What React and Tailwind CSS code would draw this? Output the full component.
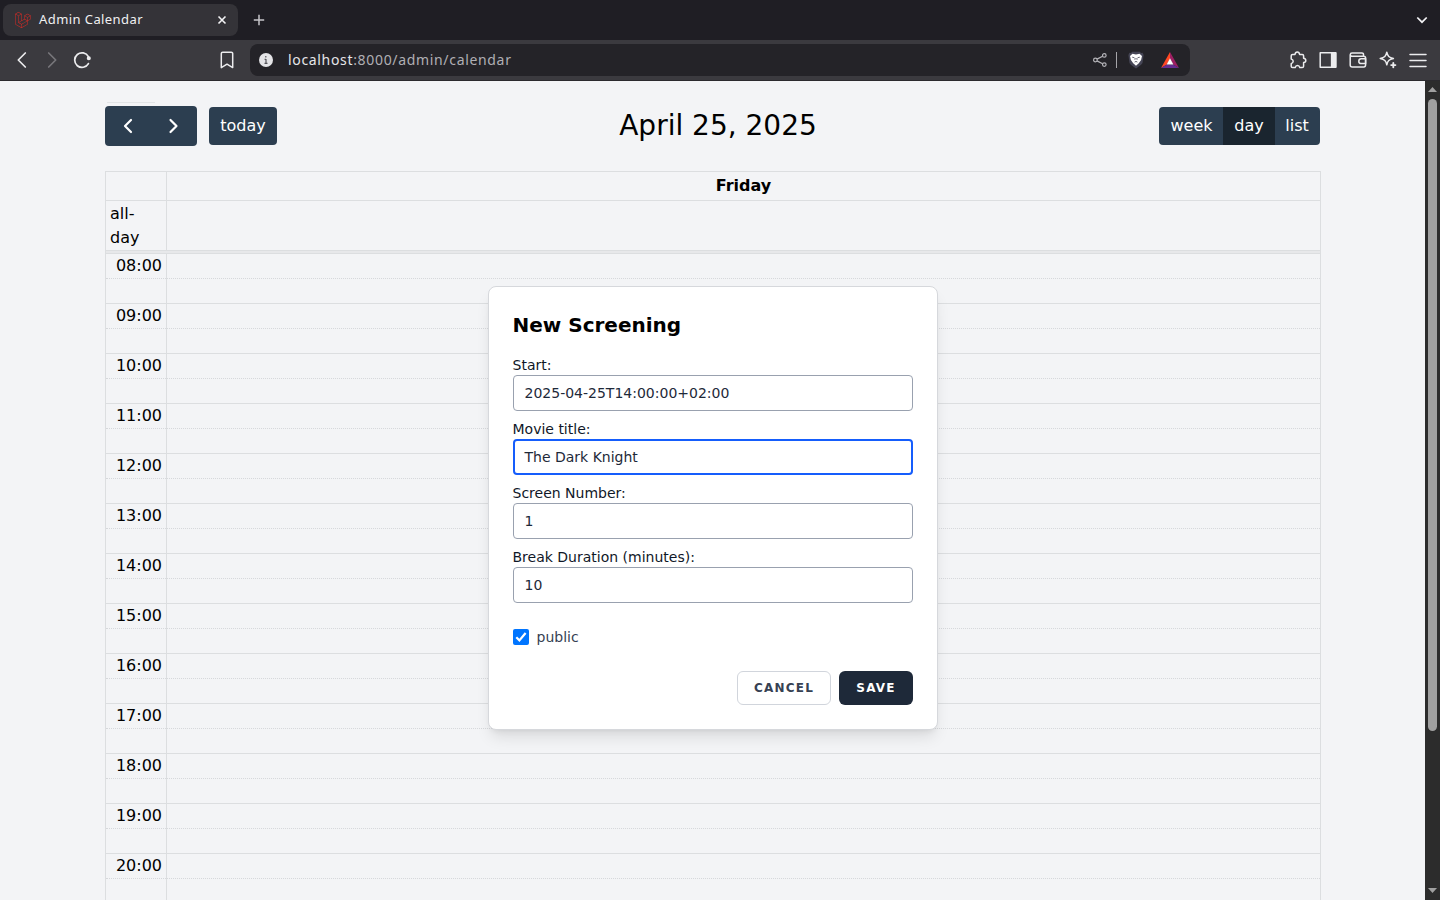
import React from "react";
import { SiLaravel } from "react-icons/si";

const hours = ["08:00", "09:00", "10:00", "11:00", "12:00", "13:00", "14:00", "15:00", "16:00", "17:00", "18:00", "19:00", "20:00"];

function Cell({ children }) {
  return <div className="flex h-[30px] w-[30px] shrink-0 items-center justify-center">{children}</div>;
}

function Icon({ children, color = "#ececee", width = 1.5 }) {
  return (
    <svg width="20" height="20" viewBox="0 0 20 20" fill="none" stroke={color} strokeWidth={width} strokeLinecap="round" strokeLinejoin="round">
      {children}
    </svg>
  );
}

function TabStrip() {
  return (
    <div className="flex h-10 items-center bg-[#1f1e24] pl-[3px] pr-3">
      <div className="flex h-8 w-[235px] items-center rounded-lg bg-[#343338] pl-3 pr-[11px]">
        <SiLaravel className="h-4 w-4 text-[#d92b25]" />
        <span className="ml-2 flex-1 pb-0.5 font-['Noto_Sans',sans-serif] text-[13px] leading-4 tracking-[0.42px] text-[#f0f0f2]">Admin Calendar</span>
        <svg width="10" height="10" viewBox="0 0 10 10" stroke="#f3f3f5" strokeWidth="1.6">
          <path d="M1.5 1.5 8.5 8.5M8.5 1.5 1.5 8.5" />
        </svg>
      </div>
      <svg className="ml-[15px]" width="12" height="12" viewBox="0 0 12 12" stroke="#c6c5c9" strokeWidth="1.5">
        <path d="M6 .8V11.2M.8 6H11.2" />
      </svg>
      <svg className="ml-auto" width="12" height="12" viewBox="0 0 12 12" fill="none" stroke="#f3f3f5" strokeWidth="1.7">
        <path d="M1.3 3.5 6 8.2 10.7 3.5" />
      </svg>
    </div>
  );
}

function Toolbar() {
  return (
    <div className="flex h-[41px] items-center border-b border-[#2b2a2e] bg-[#3b3a3f] px-[7px]">
      <Cell><Icon width={1.7}><path d="M13.3 3 6.3 10l7 7" /></Icon></Cell>
      <Cell><Icon color="#77767b" width={1.7}><path d="M6.7 3l7 7-7 7" /></Icon></Cell>
      <Cell>
        <Icon width={1.7}>
          <path d="M16.4 13.6A7.3 7.3 0 1 1 16.4 6.6" />
          <circle cx="16.8" cy="8.2" r="1.2" fill="#ececee" />
        </Icon>
      </Cell>
      <div className="ml-[115px] mr-2 flex">
        <Cell><Icon><path d="M4.3 3.6a1.4 1.4 0 0 1 1.4-1.4h8.6a1.4 1.4 0 0 1 1.4 1.4v14L10 14.2l-5.7 3.4z" /></Icon></Cell>
      </div>
      <div className="flex h-8 w-[940px] items-center rounded-lg bg-[#242328] pl-[9px] pr-[11px]">
        <svg width="14" height="14" viewBox="0 0 14 14">
          <circle cx="7" cy="7" r="7" fill="#e4e4e7" />
          <path d="M6.8 3v1.6M7 6v4.6M5.6 6.3H7M5.5 10.4h3" stroke="#55545a" strokeWidth="1.2" />
        </svg>
        <span className="ml-[15px] flex-1 font-['Noto_Sans',sans-serif] text-[14px] leading-5 tracking-[0.67px] text-[#b0afb4]">
          <span className="text-[#e6e6e9]">localhost</span>:8000/admin/calendar
        </span>
        <svg width="14" height="14" viewBox="0 0 14 14" fill="none" stroke="#b5b4b9" strokeWidth="1.2">
          <path d="M4 6.1 9.6 3.2M4 7.9l5.6 2.9" />
          <circle cx="2.4" cy="7" r="1.8" />
          <circle cx="11.3" cy="2.4" r="1.8" />
          <circle cx="11.3" cy="11.6" r="1.8" />
        </svg>
        <div className="ml-[9px] h-4 w-px bg-[#a5a4a9]" />
        <svg className="ml-[11px]" width="16" height="18" viewBox="0 0 16 18">
          <path d="M4.2 .8h7.6l1.2 1.1 1.6-.1 1 2.2-1 7.4c-.3 1.2-1.5 2.3-2.8 3.3L8 17.4l-3.8-2.7c-1.3-1-2.5-2.1-2.8-3.3L.4 4l1-2.2 1.6.1z" fill="#454555" />
          <path d="M4.5 2.8 8 3.5l3.5-.7 2.5 2.3-.9 4-2.3 3.1L8 14.8l-2.8-2.6-2.3-3.1-.9-4z" fill="#fff" />
          <path d="M4.2 6.2l2.2.5M11.8 6.2l-2.2.5M7.2 7l-.3 1.8M8.8 7l.3 1.800M6.600 11.100 8 10.400l1.400.7" stroke="#454555" strokeWidth=".8" fill="none" />
        </svg>
        <svg className="ml-[17px]" width="18" height="16" viewBox="0 0 18 16">
          <path d="M9 0 0 16l5.8-3.5L9 6.5z" fill="#ff4724" />
          <path d="M9 0l9 16-5.8-3.5L9 6.5z" fill="#9e1f63" />
          <path d="M0 16h18l-5.8-3.5H5.8z" fill="#662d91" />
          <path d="M9 6.3l3.4 6.3H5.6z" fill="#fff" />
        </svg>
      </div>
      <div className="ml-auto flex">
        <Cell><Icon><path d="M4.6 4.4H7c.2-1.5 1-2.4 2.3-2.4s2.1.9 2.3 2.4h2.6a1.4 1.4 0 0 1 1.4 1.4v2.4c1.4.2 2.2 1 2.2 2.2s-.8 2-2.2 2.2v3.6a1.4 1.4 0 0 1-1.4 1.4h-2.4c-.3-1.3-1.1-2-2.3-2s-2 .7-2.3 2H4.6a1.4 1.4 0 0 1-1.4-1.4v-2.6c1.3-.4 2-1.2 2-2.3s-.7-1.9-2-2.3V5.8a1.4 1.4 0 0 1 1.4-1.4z" /></Icon></Cell>
        <Cell><Icon><path d="M2.2 2.8h15.6v14.4H2.2z" /><path d="M13.6 3h4v14h-4z" fill="#ececee" /></Icon></Cell>
        <Cell><Icon><path d="M15.5 5.4V4.4a1.5 1.5 0 0 0-1.5-1.5H4A1.7 1.7 0 0 0 4 6.3h11.8a1.8 1.8 0 0 1 1.8 1.8v7a1.8 1.8 0 0 1-1.8 1.8H4.2a2 2 0 0 1-2-2V4.8" /><path d="M17.6 8.8h-4.4a2.4 2.4 0 0 0 0 4.8h4.4z" /></Icon></Cell>
        <Cell><Icon><path d="M8.8 2.2c.8 4 2.2 5.4 6.6 6.3-4.4.9-5.8 2.3-6.6 6.3-.8-4-2.2-5.4-6.6-6.3 4.4-.9 5.8-2.3 6.6-6.3z" /><path d="M15.3 13v4.2M13.2 15.1h4.2" strokeWidth="1.9" /></Icon></Cell>
        <Cell><Icon><path d="M2 4.5h16M2 10.5h16M2 16.5h16" /></Icon></Cell>
      </div>
    </div>
  );
}

function CalendarHeader() {
  return (
    <div className="mt-[3px] flex h-10 items-center justify-between">
      <div className="flex items-center">
        <div className="flex h-10 w-[92px] items-center justify-around rounded bg-[#2c3e50] text-white">
          <svg width="16" height="16" viewBox="0 0 16 16" fill="none" stroke="currentColor" strokeWidth="2.2" strokeLinejoin="round" strokeLinecap="round"><path d="M11 2 5 8l6 6" /></svg>
          <svg width="16" height="16" viewBox="0 0 16 16" fill="none" stroke="currentColor" strokeWidth="2.2" strokeLinejoin="round" strokeLinecap="round"><path d="M4.5 2l6 6-6 6" /></svg>
        </div>
        <button className="ml-3 h-[38px] w-[68px] rounded bg-[#2c3e50] text-white">today</button>
      </div>
      <h2 className="text-[28px] leading-9">April 25, 2025</h2>
      <div className="flex h-[38px] overflow-hidden rounded bg-[#2c3e50] text-white">
        <button className="w-16 pl-px">week</button>
        <button className="w-[52px] bg-[#1a252f]">day</button>
        <button className="w-[45px] pr-px">list</button>
      </div>
    </div>
  );
}

function Grid() {
  return (
    <div className="mt-[25px] w-[1216px] border border-[#dcdee0]">
      <div className="flex h-[29px] border-b border-[#dcdee0]">
        <div className="w-[61px] border-r border-[#dcdee0]" />
        <div className="flex-1 text-center font-bold leading-7">Friday</div>
      </div>
      <div className="flex h-[49px]">
        <div className="w-[61px] border-r border-[#dcdee0] pl-1 pt-px leading-6">all-<br />day</div>
      </div>
      <div className="h-[3px] border-t border-[#dcdee0] bg-[#e7e8ea]" />
      {hours.map((h) => (
        <div key={h} className="flex h-[50px] border-t border-[#dcdee0]">
          <div className="w-[61px] border-r border-[#dcdee0]">
            <div className="h-[24px] pr-1 text-right leading-6">{h}</div>
            <div className="border-t border-dotted border-[#d6d8db]" />
          </div>
          <div className="flex-1 pt-6">
            <div className="border-t border-dotted border-[#d6d8db]" />
          </div>
        </div>
      ))}
    </div>
  );
}

function Field({ label, value, focused }) {
  return (
    <div className="mb-2">
      <label className="block leading-5 text-[#101828]">{label}</label>
      <div className={focused ? "flex h-9 items-center rounded border-2 border-[#155dfc] px-[10px]" : "flex h-9 items-center rounded border border-[#99a1af] px-[11px]"}>
        {value}
      </div>
    </div>
  );
}

function Modal() {
  return (
    <div className="absolute left-[487.5px] top-[286px] w-[450px] rounded-lg border border-[#d6d8dc] bg-white p-6 text-sm text-[#1e2939] shadow-lg">
      <h3 className="mb-4 text-xl font-bold leading-7 text-black">New Screening</h3>
      <Field label="Start:" value="2025-04-25T14:00:00+02:00" />
      <Field label="Movie title:" value="The Dark Knight" focused />
      <Field label="Screen Number:" value="1" />
      <Field label="Break Duration (minutes):" value="10" />
      <div className="mt-6 flex h-5 items-center text-[#364153]">
        <svg width="16" height="16" viewBox="0 0 16 16">
          <rect width="16" height="16" rx="2" fill="#0075ff" />
          <path d="M3.3 8.3 6.4 11.4 12.6 4" fill="none" stroke="#fff" strokeWidth="2.2" />
        </svg>
        <span className="ml-2">public</span>
      </div>
      <div className="mt-6 flex justify-end gap-2 text-xs font-bold tracking-widest">
        <button className="h-[34px] w-[94px] rounded-md border border-[#d1d5dc] pl-px text-[#364153]">CANCEL</button>
        <button className="h-[34px] w-[74px] rounded-md bg-[#1e2939] pl-px text-white">SAVE</button>
      </div>
    </div>
  );
}

function Scrollbar() {
  return (
    <div className="flex w-[15px] flex-col items-center bg-[#2c2c2c] pb-[7px] pt-[6px]">
      <svg width="9" height="5" viewBox="0 0 9 5" fill="#a0a0a0"><path d="M0 5 4.5 0 9 5z" /></svg>
      <div className="mt-[7px] h-[632px] w-[9px] rounded-full bg-[#a0a0a0]" />
      <svg className="mt-auto" width="9" height="5" viewBox="0 0 9 5" fill="#a0a0a0"><path d="M0 0 4.5 5 9 0z" /></svg>
    </div>
  );
}

export default function App() {
  return (
    <div className="relative flex h-[900px] w-[1440px] flex-col overflow-hidden font-['DejaVu_Sans',sans-serif] text-base text-black">
      <TabStrip />
      <Toolbar />
      <div className="flex h-[819px]">
        <div className="h-full flex-1 overflow-hidden bg-[#f3f4f6] pl-[105px] pr-[105px] pt-[21px]">
          <div className="ml-[2px] h-px w-12 bg-[#e2e4e6]" />
          <CalendarHeader />
          <Grid />
        </div>
        <Scrollbar />
      </div>
      <Modal />
    </div>
  );
}
